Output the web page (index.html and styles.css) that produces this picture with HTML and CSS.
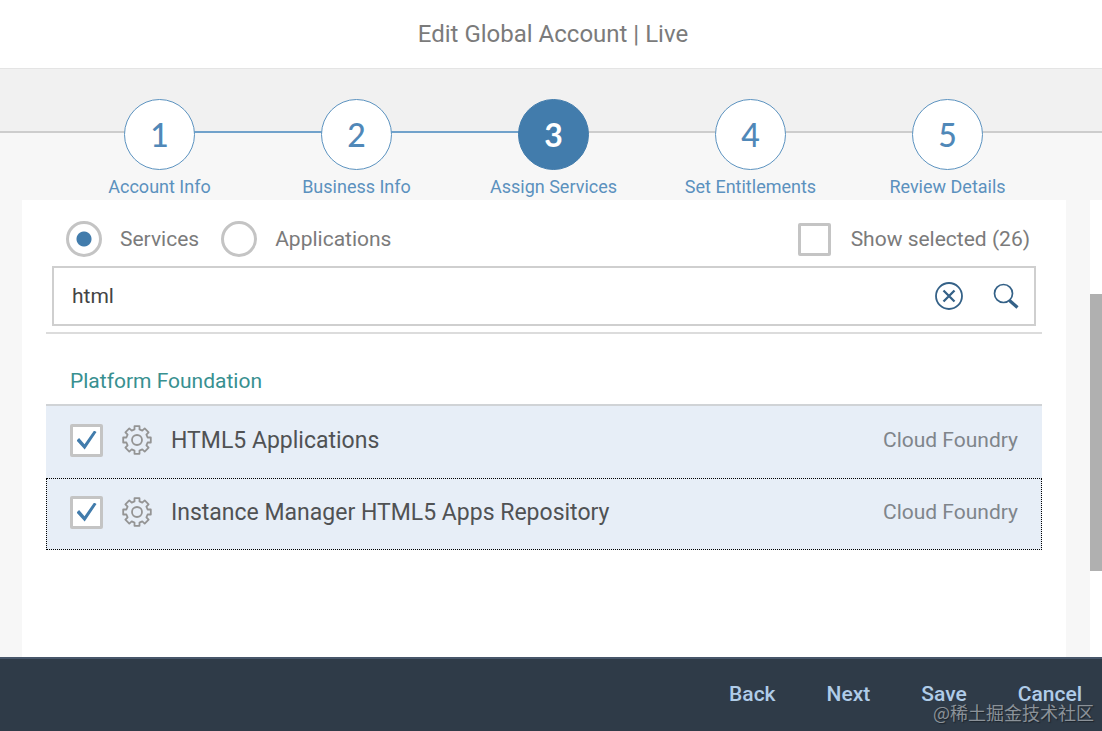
FILE: index.html
```html
<!DOCTYPE html>
<html lang="en">
<head>
<meta charset="utf-8">
<title>Edit Global Account | Live</title>
<link rel="stylesheet" href="styles.css">
</head>
<body>
<svg class="sprite" aria-hidden="true">
  <symbol id="gear" viewBox="0 0 30 30">
    <path d="M12.500 1.200h5v3.200l2.800 1.200 2.400-2.200 3.900 3.900-2.200 2.400 1.200 2.800h3.200v5h-3.200l-1.200 2.800 2.200 2.400-3.900 3.900-2.400-2.200-2.800 1.200v3.200h-5v-3.200l-2.800-1.200-2.400 2.200-3.900-3.900 2.200-2.400-1.200-2.800h-3.200v-5h3.200l1.200-2.800-2.200-2.400 3.900-3.900 2.400 2.200 2.800-1.200z"/>
    <circle cx="15" cy="15" r="5"/>
  </symbol>
</svg>
<div class="wizard">
  <header class="header"><h1 class="title">Edit Global Account | Live</h1></header>
  <nav class="progress" aria-label="Progress">
    <ol class="steps">
      <li class="step"><a class="step-link" href="#"><span class="step-number">1</span><span class="step-label">Account Info</span></a></li>
      <li class="step step-done"><a class="step-link" href="#"><span class="step-number">2</span><span class="step-label">Business Info</span></a></li>
      <li class="step step-current"><a class="step-link" href="#" aria-current="step"><span class="step-number">3</span><span class="step-label">Assign Services</span></a></li>
      <li class="step"><a class="step-link" href="#"><span class="step-number">4</span><span class="step-label">Set Entitlements</span></a></li>
      <li class="step"><a class="step-link" href="#"><span class="step-number">5</span><span class="step-label">Review Details</span></a></li>
    </ol>
  </nav>
  <div class="content">
    <main class="panel">
      <div class="toolbar">
        <label class="option"><input class="radio" type="radio" name="kind" checked>Services</label>
        <label class="option"><input class="radio" type="radio" name="kind">Applications</label>
        <label class="option option-selected"><input class="checkbox" type="checkbox">Show selected (26)</label>
      </div>
      <form class="search">
        <input class="search-input" type="text" aria-label="Search" value="html">
        <button class="icon-button" type="button" aria-label="Clear">
          <svg class="icon" viewBox="0 0 28 28"><circle cx="14" cy="14" r="13" stroke-width="1.8"/><path d="M8.5 8.5l11 11M19.5 8.5l-11 11" stroke-width="2.3"/></svg>
        </button>
        <button class="icon-button" type="button" aria-label="Search">
          <svg class="icon" viewBox="0 0 28 28"><circle cx="11.5" cy="11.5" r="9" stroke-width="1.7"/><path d="M17.5 18.5l8 7" stroke-width="3.2"/></svg>
        </button>
      </form>
      <section class="group">
        <h2 class="group-title">Platform Foundation</h2>
        <ul class="list">
          <li class="row">
            <label class="row-label"><input class="checkbox" type="checkbox" checked><svg class="gear"><use href="#gear"/></svg>HTML5 Applications</label>
            <span class="row-info">Cloud Foundry</span>
          </li>
          <li class="row row-focused">
            <label class="row-label"><input class="checkbox" type="checkbox" checked><svg class="gear"><use href="#gear"/></svg>Instance Manager HTML5 Apps Repository</label>
            <span class="row-info">Cloud Foundry</span>
          </li>
        </ul>
      </section>
    </main>
    <div class="track"><div class="thumb"></div></div>
  </div>
  <footer class="footer">
    <button class="action" type="button">Back</button>
    <button class="action" type="button">Next</button>
    <button class="action" type="button">Save</button>
    <button class="action" type="button">Cancel</button>
    <span class="watermark">@稀土掘金技术社区</span>
  </footer>
</div>
</body>
</html>
```
FILE: styles.css
```css
* { box-sizing: border-box; }
body {
  margin: 0;
  font-family: Roboto, "Noto Sans", sans-serif;
  font-size: 21px;
  color: #7b7b7b;
  background: #fff;
}
h1, h2, ol, ul { margin: 0; padding: 0; font-weight: 400; list-style: none; }
button { padding: 0; border: 0; background: none; font: inherit; cursor: pointer; }
.sprite { display: none; }
.wizard { display: flex; flex-direction: column; min-height: 100vh; }

.header { display: flex; align-items: center; justify-content: center; height: 68px; padding-left: 4px; }
.title { font-size: 24px; color: #7b7b7b; }

.progress {
  height: 132px;
  padding: 30px 56px 0 61px;
  border-top: 1px solid #e4e4e4;
  background: linear-gradient(#f1f1f1 62px, #cdcdcd 62px, #cdcdcd 64px, #f7f7f7 64px);
}
.steps { display: grid; grid-template-columns: repeat(5, 1fr); }
.step { position: relative; }
.step-done::before, .step-current::before {
  content: "";
  position: absolute;
  top: 32px;
  right: 50%;
  width: 100%;
  height: 2px;
  background: #71a2cb;
}
.step-link {
  position: relative;
  z-index: 1;
  display: flex;
  flex-direction: column;
  align-items: center;
  gap: 6px;
  color: #5b91be;
  text-decoration: none;
}
.step-number {
  display: flex;
  align-items: center;
  justify-content: center;
  width: 71px;
  height: 71px;
  border: 1px solid #5c93c0;
  border-radius: 50%;
  background: #fff;
  font-family: Lato, sans-serif;
  font-size: 32px;
  font-weight: 500;
  color: #5088b8;
}
.step-current .step-number { background: #427cac; border-color: #427cac; color: #fff; font-weight: 700; }
.step-label { font-size: 18px; line-height: 22px; white-space: nowrap; }

.content { display: flex; flex: 1; gap: 24px; padding-left: 22px; background: #f7f7f7; }
.panel { flex: 1; padding: 0 24px; background: #fff; }
.track { display: flex; width: 12px; padding: 94px 0 86px; background: #fff; }
.thumb { flex: 1; background: #b0b0b0; }

.toolbar { display: flex; align-items: center; gap: 22px; height: 66px; padding: 12px 12px 0 20px; }
.option { display: flex; align-items: center; gap: 18px; white-space: nowrap; }
.option-selected { gap: 20px; margin-left: auto; }
.radio, .checkbox { appearance: none; flex: none; margin: 0; border: 3px solid #c4c4c4; background: #fff; }
.radio { width: 36px; height: 36px; border-radius: 50%; }
.radio:checked { background: radial-gradient(circle, #427cac 7px, #fff 8px); }
.checkbox { display: grid; place-items: center; width: 33px; height: 33px; border-radius: 2px; }
.checkbox:checked::before {
  content: "";
  width: 20px;
  height: 19px;
  background: #427cac;
  clip-path: polygon(0 52%, 13% 40%, 40% 72%, 88% 0, 100% 8%, 41% 100%);
}

.search {
  display: flex;
  align-items: center;
  height: 60px;
  margin: 0 6px;
  border: 2px solid #cfcfcf;
  background: #fff;
}
.search-input {
  flex: 1;
  min-width: 0;
  height: 56px;
  padding: 0 18px;
  border: 0;
  outline: 0;
  background: transparent;
  font: inherit;
  color: #444;
}
.icon-button { display: grid; place-items: center; width: 57px; height: 56px; }
.icon { width: 28px; height: 28px; fill: none; stroke: #346187; }

.group { margin-top: 6px; border-top: 2px solid #dcdcdc; }
.group-title {
  display: flex;
  align-items: center;
  height: 72px;
  padding: 24px 24px 0;
  border-bottom: 2px solid #d0d3d6;
  font-size: 21px;
  color: #389090;
}
.row {
  display: flex;
  align-items: center;
  justify-content: space-between;
  height: 72px;
  padding: 0 23px 4px;
  border: 1px solid transparent;
  background: #e7eef7;
}
.row-focused { border: 1px dotted #000; }
.row-label { display: flex; align-items: center; gap: 19px; font-size: 23px; color: #505254; }
.gear { width: 30px; height: 30px; fill: none; stroke: #949494; stroke-width: 1.8px; stroke-linejoin: round; }
.row-info { color: #7f858b; }

.footer {
  position: relative;
  display: flex;
  align-items: center;
  justify-content: flex-end;
  gap: 51px;
  height: 74px;
  padding: 0 20px 2px;
  border-top: 2px solid #47566a;
  background: #2f3b48;
}
.action { font-weight: 500; color: #b0cce8; }
.watermark {
  position: absolute;
  right: 8px;
  bottom: 6px;
  font: 18px/26px "Noto Sans CJK SC", sans-serif;
  color: #8b9299;
  text-shadow: 1px 1px 1px #1c242c;
}
```
